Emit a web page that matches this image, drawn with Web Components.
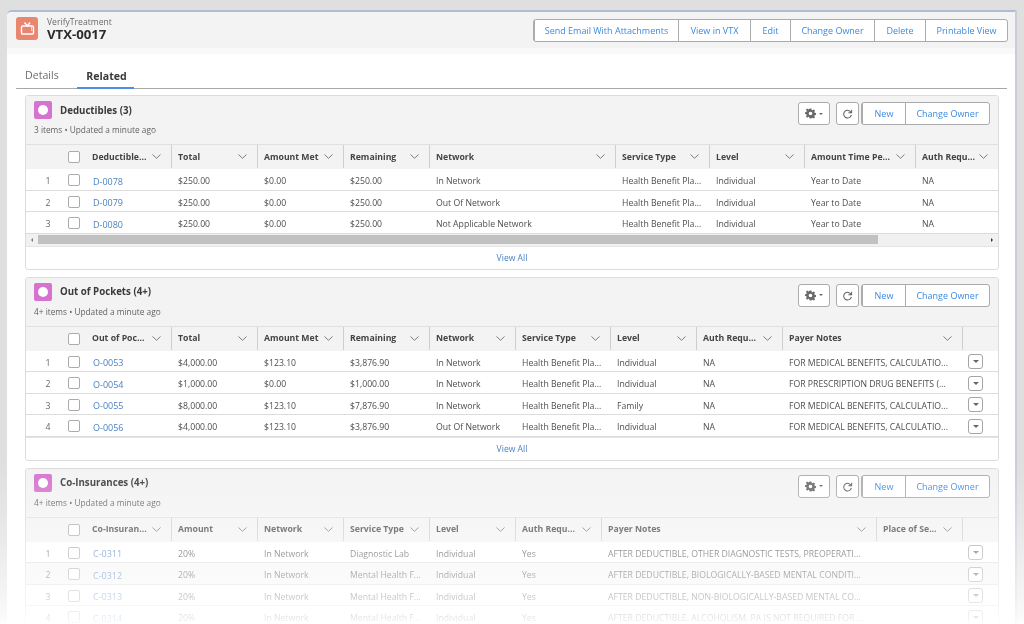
<!DOCTYPE html>
<html lang="en">
<head>
<meta charset="utf-8">
<title>VTX-0017</title>
<style>
html, body { margin: 0; height: 624px; overflow: hidden; background: #dfdfdf; }
</style>
</head>
<body>
<vt-page>
  <vt-record-header type-label="VerifyTreatment" name="VTX-0017"></vt-record-header>
  <vt-tabs></vt-tabs>
  <vt-related-card id="ded" heading="Deductibles (3)" meta="3 items • Updated a minute ago"></vt-related-card>
  <vt-related-card id="oop" heading="Out of Pockets (4+)" meta="4+ items • Updated a minute ago"></vt-related-card>
  <vt-related-card id="coi" heading="Co-Insurances (4+)" meta="4+ items • Updated a minute ago"></vt-related-card>
</vt-page>
<script>
const FONT = '"Open Sans", "Noto Sans", sans-serif'

/**
 * Joined outline buttons.
 */
customElements.define('vt-button-group', class extends HTMLElement {
  constructor () {
    super()
    this.attachShadow({ mode: 'open' })
  }

  set items (list) {
    this.shadowRoot.innerHTML = `
<style>
:host { display: inline-flex; height: 23px; box-sizing: border-box; border: 1px solid #ababab; border-radius: 3px; background: #fff; }
span { display: flex; align-items: center; justify-content: center; box-sizing: border-box; font-size: 9px; color: #3b8ae0; border-left: 1px solid #ababab; white-space: nowrap; }
span:first-child { border-left: none; }
</style>
${list.map(([t, w]) => `<span style="width:${w}px">${t}</span>`).join('')}`
  }
})

/**
 * Grid table with optional row action column and scrollbar.
 */
customElements.define('vt-data-table', class extends HTMLElement {
  constructor () {
    super()
    this.attachShadow({ mode: 'open' })
  }

  set config ({ cols, widths, rows, action, scroll, shaded }) {
    const tpl = `34px 26px ${widths.map(w => w + 'px').join(' ')}`
    const chev = '<svg width="9" height="5" viewBox="0 0 9 5" fill="none" stroke="#6f6f6f" stroke-width=".9"><path d="M.5.5 4.500 4.300 8.500.5"/></svg>'
    const box = '<div class="c"><u></u></div>'
    const head = cols.map(c => `<div class="th">${c ? `<span>${c}</span>${chev}` : ''}</div>`).join('')
    const body = rows.map((r, i) => `
<div class="row${shaded === i ? ' shade' : ''}">
  <div class="n">${i + 1}</div>${box}
  ${r.map((t, j) => `<div class="td${j === 0 ? ' link' : ''}">${t}</div>`).join('')}
  ${action ? '<div class="act"><em><b></b></em></div>' : ''}
</div>`).join('')
    this.shadowRoot.innerHTML = `
<style>
:host { display: block; font-size: 8.7px; }
.row, .hd { display: grid; grid-template-columns: ${tpl}; align-items: center; }
.hd { height: 25px; background: #f3f3f3; border-top: 1px solid #e0e0e0; box-sizing: border-box; align-items: stretch; }
.row { height: 21.5px; box-sizing: border-box; border-bottom: 1px solid #dcdcdc; background: #fff; color: #4e4e4e; }
.row.shade { background: #f5f5f5; }
.th { display: flex; align-items: center; justify-content: space-between; box-sizing: border-box; padding: 0 10px 0 6px; border-right: 1px solid #cfcfcf; margin-bottom: 1px; font-weight: 700; color: #444; white-space: nowrap; min-width: 0; }
.th:last-child { border-right: none; }
.n, .td { padding-top: 4px; }
.n { text-align: center; color: #666; padding-left: 10px; box-sizing: border-box; }
.c { display: flex; padding-left: 8px; }
.row .c, .act { padding-top: 2px; }
u { display: block; width: 12px; height: 12px; box-sizing: border-box; border: 1px solid #ababab; border-radius: 2px; background: #fff; }
.hd .c { align-items: center; }
.td { padding-left: 6px; white-space: nowrap; overflow: hidden; }
.link { color: #4a82c4; font-size: 9px; padding-left: 7px; }
.act { display: flex; padding-left: 5px; }
em { display: flex; width: 15px; height: 15px; box-sizing: border-box; border: 1px solid #a5a5a5; border-radius: 3px; align-items: center; justify-content: center; background: #fff; }
em b { width: 0; height: 0; border: 3px solid transparent; border-top: 3.500px solid #666; border-bottom: none; }
#sb { height: 12px; background: #f1f1f1; display: flex; align-items: center; justify-content: space-between; }
#sb i { width: 12px; display: flex; justify-content: center; }
#sb s { width: 0; height: 0; border: 2.500px solid transparent; }
#l { border-right-color: #777 !important; border-left: none !important; }
#r { border-left-color: #333 !important; border-right: none !important; }
#thumb { width: 840px; height: 9px; background: #c1c1c1; margin-right: auto; }
</style>
<div class="hd"><div></div><div class="c"><u></u></div>${head}</div>
${body}
${scroll ? '<div id="sb"><i><s id="l"></s></i><div id="thumb"></div><i><s id="r"></s></i></div>' : ''}`
  }
})

/**
 * Outer gray frame, white window and the fade at the bottom.
 */
customElements.define('vt-page', class extends HTMLElement {
  constructor () {
    super()
    this.attachShadow({ mode: 'open' }).innerHTML = `
<style>
:host { display: block; height: 624px; box-sizing: border-box; padding: 10px 7px 0 7px; position: relative; overflow: hidden; font-family: ${FONT}; color: #444; filter: blur(.55px); }
#win { height: 640px; background: #fff; border-top: 2px solid #aebcd6; border-right: 2px solid #c9cdd8; border-top-left-radius: 5px; overflow: hidden; }
#fade { position: absolute; left: 0; right: 0; top: 460px; bottom: 0; background: linear-gradient(to bottom, rgba(255,255,255,0) 0, rgba(255,255,255,.3) 70px, rgba(255,255,255,.55) 115px, rgba(255,255,255,.7) 140px, rgba(255,255,255,.85) 158px, rgba(255,255,255,.95) 164px); }
</style>
<div id="win"><slot></slot></div>
<div id="fade"></div>`
  }
})

/**
 * Record title and the action buttons.
 */
customElements.define('vt-record-header', class extends HTMLElement {
  constructor () {
    super()
    const labels = [['Send Email With Attachments', 144], ['View in VTX', 72], ['Edit', 40], ['Change Owner', 84], ['Delete', 51], ['Printable View', 82]]
    this.attachShadow({ mode: 'open' }).innerHTML = `
<style>
:host { display: flex; align-items: flex-start; justify-content: space-between; height: 42px; box-sizing: border-box; padding: 5px 7px 0 9px; background: #f3f3f3; border-bottom: 6px solid #f9f9f9; }
#left { display: flex; gap: 9px; }
#icon { width: 22px; height: 23px; border-radius: 3px; background: #e9866f; display: flex; align-items: center; justify-content: center; }
#type { font-size: 8.6px; line-height: 11px; color: #6b6b6b; }
#name { font-size: 13.2px; line-height: 13px; font-weight: 700; color: #2b2b2b; }
vt-button-group { margin-top: 2px; }
</style>
<div id="left">
  <div id="icon"><svg width="15" height="15" viewBox="0 0 15 15" fill="none" stroke="#fff" stroke-width="1.4"><rect x="1.5" y="5" width="12" height="8" rx="1.2"/><path d="M4.5 1.5 7.5 5 10 1.5"/><path d="M11.6 7v0M11.6 9v0" stroke-linecap="round"/></svg></div>
  <div><div id="type"></div><div id="name"></div></div>
</div>
<vt-button-group></vt-button-group>`
    this.shadowRoot.querySelector('#type').textContent = this.getAttribute('type-label')
    this.shadowRoot.querySelector('#name').textContent = this.getAttribute('name')
    this.shadowRoot.querySelector('vt-button-group').items = labels
  }
})

/**
 * Details and Related tabs.
 */
customElements.define('vt-tabs', class extends HTMLElement {
  constructor () {
    super()
    this.attachShadow({ mode: 'open' }).innerHTML = `
<style>
:host { display: flex; margin: 0 8px 6px 9px; height: 35px; box-sizing: border-box; border-bottom: 1px solid #a8a8a8; align-items: flex-end; font-size: 10.6px; }
div { height: 25px; box-sizing: border-box; padding-top: 5px; text-align: center; }
#a { width: 61px; color: #6f6f6f; text-align: left; padding-left: 9px; }
#b { width: 57px; font-weight: 700; color: #3a3a3a; border-bottom: 2px solid #4a90e2; margin-bottom: -1px; padding-left: 2px; }
</style>
<div id="a">Details</div><div id="b">Related</div>`
  }
})

/**
 * One related list: header, table and the View All link.
 */
customElements.define('vt-related-card', class extends HTMLElement {
  constructor () {
    super()
    this.attachShadow({ mode: 'open' }).innerHTML = `
<style>
:host { display: block; margin: 0 16px 7px 18px; border: 1px solid #dcdcdc; border-radius: 3px; overflow: hidden; background: #fff; }
#head { height: 48px; box-sizing: border-box; background: #f3f3f3; padding: 5px 8px 0 8px; display: flex; justify-content: space-between; }
#title { display: flex; align-items: center; gap: 8px; height: 18px; font-size: 9.7px; font-weight: 700; color: #3a3a3a; }
#ic { width: 18px; height: 18px; border-radius: 2px; background: #d672cf; display: flex; align-items: center; justify-content: center; }
#ic i { width: 10px; height: 10px; border-radius: 50%; background: #fff; }
#meta { font-size: 8.3px; color: #5f5f5f; margin-top: 5px; line-height: 11px; }
#tools { display: flex; align-items: flex-start; margin-top: 1px; }
.tool { height: 23px; box-sizing: border-box; border: 1px solid #ababab; border-radius: 3px; background: #fff; display: flex; align-items: center; justify-content: center; }
#gear { width: 32px; gap: 3px; margin-right: 6px; }
#gear b { width: 0; height: 0; border: 2.5px solid transparent; border-top-color: #666; border-bottom: none; }
#ref { width: 23px; margin-right: 2px; }
#all { height: 23px; box-sizing: border-box; display: flex; align-items: center; justify-content: center; font-size: 8.6px; color: #4a82c4; border-top: 1px solid #e4e4e4; }
</style>
<div id="head">
  <div>
    <div id="title"><div id="ic"><i></i></div><span id="h"></span></div>
    <div id="meta"></div>
  </div>
  <div id="tools">
    <div class="tool" id="gear"><svg width="11" height="11" viewBox="0 0 24 24" fill="#6a6a6a"><path fill-rule="evenodd" d="M10 1h4l.6 3.2 1.9.8L19.200 3.200 22 6l-1.800 2.700.8 1.900 3 .4v4l-3 .6-.8 1.900 1.800 2.700-2.800 2.800-2.700-1.800-1.900.8L14 23h-4l-.6-3-1.900-.8-2.700 1.800L2 18.200l1.800-2.700-.8-1.900L0 13V9l3-.4.800-1.900L2 4l2.800-2.800 2.700 1.800 1.900-.8zM12 8a4 4 0 1 0 0 8 4 4 0 0 0 0-8z"/></svg><b></b></div>
    <div class="tool" id="ref"><svg width="11" height="11" viewBox="0 0 12 12" fill="none" stroke="#5f5f5f" stroke-width="1.100"><path d="M10 5.200A4.200 4.200 0 1 0 10.200 7.500"/><path d="M10.500 1.800v3.500H7" /></svg></div>
    <vt-button-group></vt-button-group>
  </div>
</div>
<vt-data-table></vt-data-table>
<div id="all">View All</div>`
    this.shadowRoot.querySelector('#h').textContent = this.getAttribute('heading')
    this.shadowRoot.querySelector('#meta').textContent = this.getAttribute('meta')
    this.shadowRoot.querySelector('vt-button-group').items = [['New', 43], ['Change Owner', 84]]
  }

  set table (cfg) {
    this.shadowRoot.querySelector('vt-data-table').config = cfg
  }
})

const m = 'FOR MEDICAL BENEFITS, CALCULATIO...'
const h = 'Health Benefit Pla...'
document.querySelector('#ded').table = {
  cols: ['Deductible...', 'Total', 'Amount Met', 'Remaining', 'Network', 'Service Type', 'Level', 'Amount Time Pe...', 'Auth Requ...'],
  widths: [86, 86, 86, 86, 186, 94, 95, 111, 82],
  scroll: true,
  rows: [
    ['D-0078', '$250.00', '$0.00', '$250.00', 'In Network', h, 'Individual', 'Year to Date', 'NA'],
    ['D-0079', '$250.00', '$0.00', '$250.00', 'Out Of Network', h, 'Individual', 'Year to Date', 'NA'],
    ['D-0080', '$250.00', '$0.00', '$250.00', 'Not Applicable Network', h, 'Individual', 'Year to Date', 'NA']
  ]
}
document.querySelector('#oop').table = {
  cols: ['Out of Poc...', 'Total', 'Amount Met', 'Remaining', 'Network', 'Service Type', 'Level', 'Auth Requ...', 'Payer Notes', ''],
  widths: [86, 86, 86, 86, 86, 95, 86, 86, 180, 35],
  action: true,
  rows: [
    ['O-0053', '$4,000.00', '$123.10', '$3,876.90', 'In Network', h, 'Individual', 'NA', m],
    ['O-0054', '$1,000.00', '$0.00', '$1,000.00', 'In Network', h, 'Individual', 'NA', 'FOR PRESCRIPTION DRUG BENEFITS (...'],
    ['O-0055', '$8,000.00', '$123.10', '$7,876.90', 'In Network', h, 'Family', 'NA', m],
    ['O-0056', '$4,000.00', '$123.10', '$3,876.90', 'Out Of Network', h, 'Individual', 'NA', m]
  ]
}
document.querySelector('#coi').table = {
  cols: ['Co-Insuran...', 'Amount', 'Network', 'Service Type', 'Level', 'Auth Requ...', 'Payer Notes', 'Place of Se...', ''],
  widths: [86, 86, 86, 86, 86, 86, 275, 86, 35],
  action: true,
  shaded: 1,
  rows: [
    ['C-0311', '20%', 'In Network', 'Diagnostic Lab', 'Individual', 'Yes', 'AFTER DEDUCTIBLE, OTHER DIAGNOSTIC TESTS, PREOPERATI...', ''],
    ['C-0312', '20%', 'In Network', 'Mental Health F...', 'Individual', 'Yes', 'AFTER DEDUCTIBLE, BIOLOGICALLY-BASED MENTAL CONDITI...', ''],
    ['C-0313', '20%', 'In Network', 'Mental Health F...', 'Individual', 'Yes', 'AFTER DEDUCTIBLE, NON-BIOLOGICALLY-BASED MENTAL CO...', ''],
    ['C-0314', '20%', 'In Network', 'Mental Health F...', 'Individual', 'Yes', 'AFTER DEDUCTIBLE, ALCOHOLISM, PA IS NOT REQUIRED FOR ...', '']
  ]
}
</script>
</body>
</html>
